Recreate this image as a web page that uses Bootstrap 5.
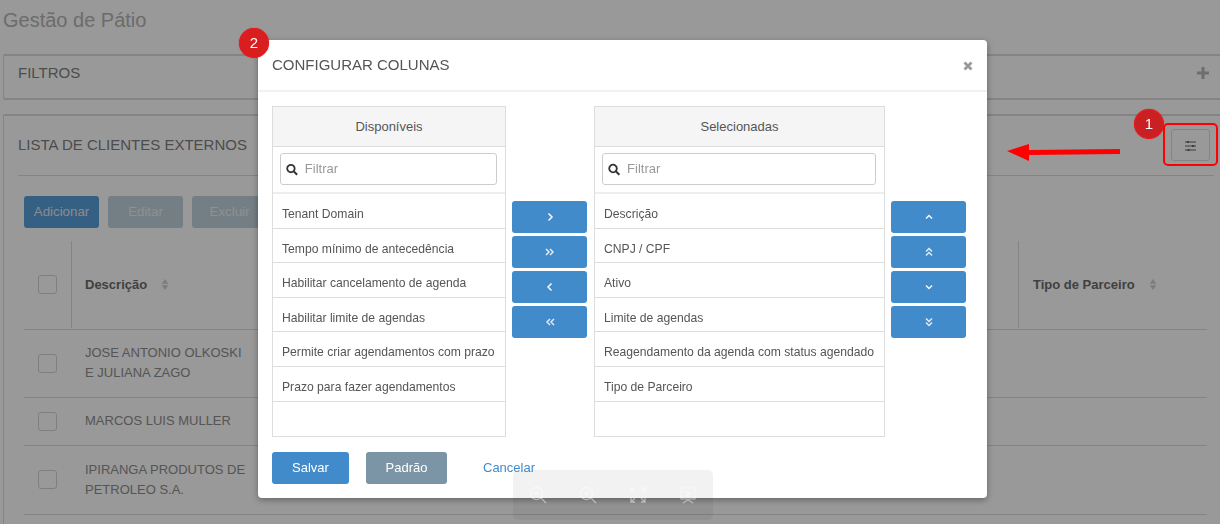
<!DOCTYPE html>
<html lang="pt-BR">
<head>
<meta charset="utf-8">
<title>Gestão de Pátio</title>
<link rel="stylesheet" href="https://cdn.jsdelivr.net/npm/bootstrap@5.3.0/dist/css/bootstrap.min.css">
<style>
html,body{height:524px;overflow:hidden}
body{font-family:"Liberation Sans",Arial,sans-serif;font-size:12px;color:#555;background:#fff;--bs-body-font-family:"Liberation Sans",Arial,sans-serif}
.page-wrap{width:1300px;padding:0 0 0 3px}
.page-ttl{font-size:20px;font-weight:400;color:#b4b4b4;margin:0;height:54px;line-height:41px}
.box{border:2px solid #ddd;border-width:2px 0 2px 2px;border-left-width:1px;border-radius:2px 0 0 2px}
.box-filter{height:46px;padding:0 90px 0 14px;margin-bottom:14px;font-size:15px;line-height:34px;color:#808080}
.box-filter .plus-ic{position:absolute;left:1197px;top:67px}
.box-list{height:500px;padding:0 0 0 14px}
.list-head{height:60px;width:1196px;border-bottom:1px solid #ddd;font-size:15px;color:#808080}
.list-head span{display:block;padding-top:18px}
.cfg-btn{width:39px;height:32px;border:1px solid #ddd;border-radius:3px;padding:0;background:transparent}
.act-row{padding:20px 0 0 6px;gap:9px}
.act-btn{width:75px;height:32px;padding:0;font-size:13.3px;border-radius:3px;border:0}
.act-on{background:#5a9fdc;color:#e8e8e8}
.act-off{background:#c0d4de;color:#f0f0f0}
.grid-tbl{table-layout:fixed;width:1183px;margin:13px 0 0 6px;font-size:13px;color:#8e8e8e;border-collapse:collapse}
.grid-tbl td,.grid-tbl th{border-bottom:1px solid #ddd;vertical-align:middle;padding:0;line-height:19.6px}
.grid-tbl th{height:88px;font-weight:700;color:#6c6c6c;vertical-align:top}
.th-in{height:87px;padding:34px 0 0 14px}
.th-txt{padding-left:13px}
.th-sep{border-right:1px solid #ddd}
.td-txt{padding-left:13px!important}
.chk{display:block;width:19px;height:19px;border:1px solid #d4d4d4;border-radius:3px;margin-left:14px}
.th-in .chk{margin:0}
.sort-ic{margin-left:14px;vertical-align:-1px}
.r1{height:68px}.r2{height:48px}.r3{height:69px}
.modal-box{position:absolute;left:258px;top:40px;width:729px;height:458px;z-index:1060;background:#fff;border-radius:4px;box-shadow:0 2px 6px rgba(0,0,0,.35);border:0;color:#555}
.mb-head{height:52px;padding:0 14px;border-bottom:2px solid #f2f2f2}
.mb-title{font-size:15px;font-weight:400;color:#555;margin:0;text-transform:uppercase}
.mb-close{margin-top:2px}
.mb-body{padding:14px 14px 0;gap:6px;height:345px}
.pick{border:1px solid #ddd;height:331px;display:flex;flex-direction:column}
.pick-l{width:234px}.pick-r{width:291px;margin-left:1px}
.pick-head{height:40px;background:#f5f5f5;border-bottom:1px solid #ddd;text-align:center;line-height:39px;font-size:13px;color:#555}
.pick-filter{height:47px;padding:6px 8px 0 7px;border-bottom:2px solid #eee;flex:none}
.pick-input{height:32px;border:1px solid #ccc;border-radius:3px;padding:0 5px;gap:7px;color:#aaa}
.pick-input .form-control{border:0;padding:0;height:28px;margin-bottom:2px;font-size:13px;box-shadow:none;background:transparent}
.pick-input .form-control::placeholder{color:#999}
.pick-list{--bs-list-group-border-color:#ddd;--bs-list-group-color:#555;border-radius:0}
.pick-list .list-group-item{height:34.6px;line-height:33px;padding:4px 0 0 9px;font-size:12.15px;border-width:0 0 1px;white-space:nowrap;background:transparent}
.mv-col{padding-top:95px;gap:3px}
.mv-btn{width:75px;height:32px;padding:0;background:#428bca;border:0;border-radius:3px;display:flex;align-items:center;justify-content:center}
.mb-foot{padding:15px 14px 0;height:47px;align-items:flex-start}
.foot-btn{height:32px;font-size:13px;padding:0;border:0;border-radius:3px;color:#fff}
.foot-save{width:77px;background:#428bca;margin-right:17px}
.foot-std{width:81px;background:#7b95a6;margin-right:36px}
.foot-cancel{font-size:13px;color:#428bca;text-decoration:none;line-height:32px}
.viewer-bar{position:absolute;left:513px;top:470px;width:200px;height:50px;border-radius:5px;background:rgba(0,0,0,.05);z-index:1070}
.viewer-bar span{width:50px;display:flex;justify-content:center}
.viewer-bar svg{fill:none;stroke:#fff;stroke-opacity:.45}
.mark-dot{position:absolute;width:30px;height:30px;border-radius:50%;background:#cb2023;border:1px solid #e81c1c;color:#fff;font-size:15px;line-height:28px;text-align:center;z-index:1080;box-shadow:0 0 1px #e00}
.mark-a{left:1134px;top:109px}
.mark-b{left:239px;top:28px;background:#d81e1e}
.mark-rect{position:absolute;left:1163px;top:123px;width:55px;height:43px;border:2px solid #f00;border-radius:5px;z-index:1080}
.mark-arrow{position:absolute;left:1005px;top:140px;z-index:1080}
</style>
</head>
<body>
<div class="page-wrap">
  <h1 class="page-ttl">Gestão de Pátio</h1>
  <div class="box box-filter">FILTROS
    <svg class="plus-ic" width="12" height="12" viewBox="0 0 12 12"><path d="M4.500 0h3v4.500h4.500v3h-4.500v4.500h-3v-4.500h-4.500v-3h4.500z" fill="#b8b8b8"/></svg>
  </div>
  <div class="box box-list">
    <div class="list-head d-flex align-items-start">
      <span>LISTA DE CLIENTES EXTERNOS</span>
    </div>
    <div class="d-flex act-row">
      <button class="btn act-btn act-on" type="button">Adicionar</button>
      <button class="btn act-btn act-off" type="button">Editar</button>
      <button class="btn act-btn act-off" type="button">Excluir</button>
    </div>
    <table class="grid-tbl">
      <colgroup><col style="width:48px"><col style="width:200px"><col><col style="width:188px"></colgroup>
      <thead><tr>
        <th><div class="th-in th-sep"><span class="chk"></span></div></th>
        <th><div class="th-in th-txt">Descrição<svg class="sort-ic" width="8" height="11" viewBox="0 0 9 13"><path d="M4.500 0l4 5.500h-8zM4.500 13l4-5.500h-8z" fill="#d0d0d0"/></svg></div></th>
        <th><div class="th-in th-sep"></div></th>
        <th><div class="th-in">Tipo de Parceiro<svg class="sort-ic" width="8" height="11" viewBox="0 0 9 13"><path d="M4.500 0l4 5.500h-8zM4.500 13l4-5.500h-8z" fill="#d0d0d0"/></svg></div></th>
      </tr></thead>
      <tbody>
        <tr class="r1"><td><span class="chk"></span></td><td class="td-txt">JOSE ANTONIO OLKOSKI<br>E JULIANA ZAGO</td><td></td><td></td></tr>
        <tr class="r2"><td><span class="chk"></span></td><td class="td-txt">MARCOS LUIS MULLER</td><td></td><td></td></tr>
        <tr class="r3"><td><span class="chk"></span></td><td class="td-txt">IPIRANGA PRODUTOS DE<br>PETROLEO S.A.</td><td></td><td></td></tr>
      </tbody>
    </table>
  </div>
</div>

<button class="cfg-btn position-absolute" style="left:1171px;top:129px" type="button" aria-label="Configurar colunas">
  <svg width="13" height="12" viewBox="0 0 13 12"><g stroke="#666" stroke-width="1" fill="#666"><path d="M1 2h11M1 6h11M1 10h11" fill="none"/><rect x="3" y="1" width="2" height="2" stroke="none"/><rect x="8" y="5" width="2" height="2" stroke="none"/><rect x="3.500" y="9" width="2" height="2" stroke="none"/></g></svg>
</button>

<div class="modal-backdrop show" style="--bs-backdrop-opacity:.4"></div>

<div class="modal-box d-flex flex-column">
  <div class="mb-head d-flex align-items-center justify-content-between">
    <h5 class="mb-title">Configurar colunas</h5>
    <svg class="mb-close" width="10" height="10" viewBox="0 0 10 10" aria-label="Fechar"><path d="M1.500 1.500l7 7M8.500 1.500l-7 7" stroke="#999" stroke-width="2.800"/></svg>
  </div>
  <div class="mb-body d-flex align-items-start">
    <div class="pick pick-l">
      <div class="pick-head">Disponíveis</div>
      <div class="pick-filter"><div class="pick-input d-flex align-items-center">
        <svg width="13" height="13" viewBox="0 0 12 12"><circle cx="5" cy="5" r="3.800" fill="none" stroke="#333" stroke-width="1.800"/><path d="M8 8l3.300 3.300" stroke="#333" stroke-width="2"/></svg>
        <input class="form-control" type="text" placeholder="Filtrar">
      </div></div>
      <ul class="list-group pick-list">
        <li class="list-group-item">Tenant Domain</li>
        <li class="list-group-item">Tempo mínimo de antecedência</li>
        <li class="list-group-item">Habilitar cancelamento de agenda</li>
        <li class="list-group-item">Habilitar limite de agendas</li>
        <li class="list-group-item">Permite criar agendamentos com prazo</li>
        <li class="list-group-item">Prazo para fazer agendamentos</li>
      </ul>
    </div>
    <div class="mv-col d-flex flex-column">
      <button class="mv-btn" type="button" aria-label="Mover"><svg width="8" height="10" viewBox="0 0 8 10"><path d="M2.500 1.500l3.500 3.500-3.500 3.500" fill="none" stroke="#f4f8fc" stroke-width="1.500"/></svg></button>
      <button class="mv-btn" type="button" aria-label="Mover todos"><svg width="10" height="10" viewBox="0 0 10 10"><path d="M1 2l3 3-3 3M5 2l3 3-3 3" fill="none" stroke="#dfeaf5" stroke-width="1.500"/></svg></button>
      <button class="mv-btn" type="button" aria-label="Remover"><svg width="8" height="10" viewBox="0 0 8 10"><path d="M5.500 1.500l-3.500 3.500 3.500 3.500" fill="none" stroke="#f4f8fc" stroke-width="1.500"/></svg></button>
      <button class="mv-btn" type="button" aria-label="Remover todos"><svg width="10" height="10" viewBox="0 0 10 10"><path d="M5 2l-3 3 3 3M9 2l-3 3 3 3" fill="none" stroke="#dfeaf5" stroke-width="1.500"/></svg></button>
    </div>
    <div class="pick pick-r">
      <div class="pick-head">Selecionadas</div>
      <div class="pick-filter"><div class="pick-input d-flex align-items-center">
        <svg width="13" height="13" viewBox="0 0 12 12"><circle cx="5" cy="5" r="3.800" fill="none" stroke="#333" stroke-width="1.800"/><path d="M8 8l3.300 3.300" stroke="#333" stroke-width="2"/></svg>
        <input class="form-control" type="text" placeholder="Filtrar">
      </div></div>
      <ul class="list-group pick-list">
        <li class="list-group-item">Descrição</li>
        <li class="list-group-item">CNPJ / CPF</li>
        <li class="list-group-item">Ativo</li>
        <li class="list-group-item">Limite de agendas</li>
        <li class="list-group-item">Reagendamento da agenda com status agendado</li>
        <li class="list-group-item">Tipo de Parceiro</li>
      </ul>
    </div>
    <div class="mv-col d-flex flex-column">
      <button class="mv-btn" type="button" aria-label="Subir"><svg width="10" height="8" viewBox="0 0 10 8"><path d="M2 5.500l3-3 3 3" fill="none" stroke="#f4f8fc" stroke-width="1.500"/></svg></button>
      <button class="mv-btn" type="button" aria-label="Topo"><svg width="10" height="10" viewBox="0 0 10 10"><path d="M2 4.500l3-3 3 3M2 8.500l3-3 3 3" fill="none" stroke="#dfeaf5" stroke-width="1.500"/></svg></button>
      <button class="mv-btn" type="button" aria-label="Descer"><svg width="10" height="8" viewBox="0 0 10 8"><path d="M2 2.500l3 3 3-3" fill="none" stroke="#f4f8fc" stroke-width="1.500"/></svg></button>
      <button class="mv-btn" type="button" aria-label="Fim"><svg width="10" height="10" viewBox="0 0 10 10"><path d="M2 1.500l3 3 3-3M2 5.500l3 3 3-3" fill="none" stroke="#dfeaf5" stroke-width="1.500"/></svg></button>
    </div>
  </div>
  <div class="mb-foot d-flex">
    <button class="foot-btn foot-save" type="button">Salvar</button>
    <button class="foot-btn foot-std" type="button">Padrão</button>
    <a class="foot-cancel" href="#">Cancelar</a>
  </div>
</div>

<div class="viewer-bar d-flex align-items-center">
  <span><svg width="18" height="18" viewBox="0 0 18 18" stroke-width="1.300"><circle cx="7.500" cy="7.500" r="6"/><path d="M12 12l5 5M5 7.500h5"/></svg></span>
  <span><svg width="18" height="18" viewBox="0 0 18 18" stroke-width="1.300"><circle cx="7.500" cy="7.500" r="6"/><path d="M12 12l5 5M5 7.500h5M7.500 5v5"/></svg></span>
  <span><svg width="16" height="16" viewBox="0 0 16 16" stroke-width="1.300"><path d="M1 5V1h4M11 1h4v4M15 11v4h-4M5 15H1v-4M1 1l4 4M15 1l-4 4M15 15l-4-4M1 15l4-4"/></svg></span>
  <span><svg width="16" height="18" viewBox="0 0 16 18" stroke-width="1.200"><rect x="1" y="2" width="14" height="11"/><path d="M6.500 5v5l4-2.500zM3 17l5-3 5 3"/></svg></span>
</div>

<div class="mark-dot mark-a">1</div>
<div class="mark-dot mark-b">2</div>
<div class="mark-rect"></div>
<svg class="mark-arrow" width="118" height="22" viewBox="0 0 118 22"><path d="M2 11L24 4v6l91-1v5l-91 1v6z" fill="#f00"/></svg>
<script src="https://cdn.jsdelivr.net/npm/bootstrap@5.3.0/dist/js/bootstrap.bundle.min.js"></script>
</body>
</html>
